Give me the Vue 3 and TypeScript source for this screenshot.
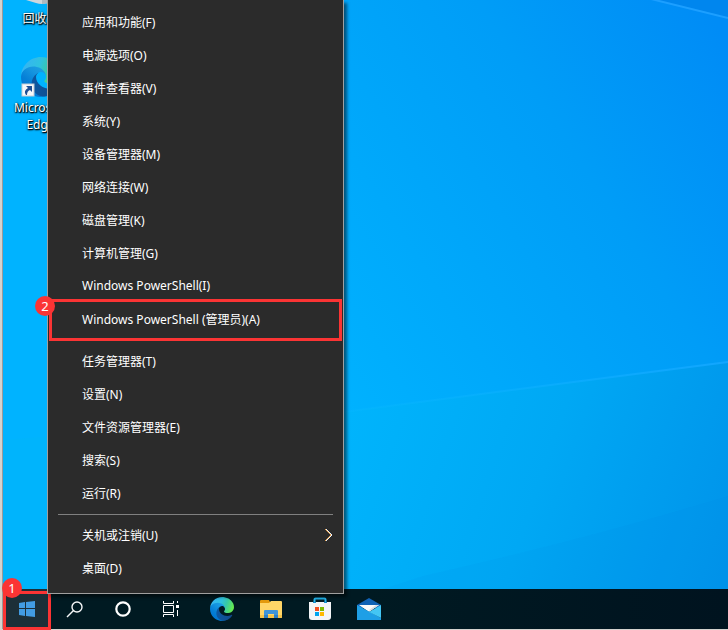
<script setup lang="ts">
interface MenuEntry {
  label: string
  submenu?: boolean
  step?: number
}

const groups: MenuEntry[][] = [
  [
    { label: '应用和功能(F)' },
    { label: '电源选项(O)' },
    { label: '事件查看器(V)' },
    { label: '系统(Y)' },
    { label: '设备管理器(M)' },
    { label: '网络连接(W)' },
    { label: '磁盘管理(K)' },
    { label: '计算机管理(G)' },
    { label: 'Windows PowerShell(I)' },
    { label: 'Windows PowerShell (管理员)(A)', step: 2 },
  ],
  [
    { label: '任务管理器(T)' },
    { label: '设置(N)' },
    { label: '文件资源管理器(E)' },
    { label: '搜索(S)' },
    { label: '运行(R)' },
  ],
  [{ label: '关机或注销(U)', submenu: true }, { label: '桌面(D)' }],
]
</script>

<template>
  <div class="screen">
    <svg width="0" height="0" class="defs" aria-hidden="true">
      <defs>
        <linearGradient id="edge-a" gradientUnits="userSpaceOnUse" x1="58" y1="177" x2="236" y2="177">
          <stop offset="0" stop-color="#0c59a4" />
          <stop offset="1" stop-color="#114a8b" />
        </linearGradient>
        <linearGradient id="edge-b" gradientUnits="userSpaceOnUse" x1="150" y1="90" x2="50" y2="215">
          <stop offset="0" stop-color="#1b9de2" />
          <stop offset="0.3" stop-color="#1595df" />
          <stop offset="0.7" stop-color="#0680d7" />
          <stop offset="1" stop-color="#0078d4" />
        </linearGradient>
        <linearGradient id="edge-c" gradientUnits="userSpaceOnUse" x1="20" y1="50" x2="240" y2="130">
          <stop offset="0" stop-color="#35b5f1" />
          <stop offset="0.4" stop-color="#2fc2df" />
          <stop offset="0.65" stop-color="#36c8a8" />
          <stop offset="1" stop-color="#66eb4e" />
        </linearGradient>
        <symbol id="edge" viewBox="0 0 256 256">
          <path fill="url(#edge-a)" d="M231 190.500c-3.400 1.800-6.900 3.400-10.500 4.700-11.500 4.300-23.600 6.500-35.900 6.500-47.300 0-88.500-32.500-88.500-74.300.1-11.400 6.400-21.900 16.400-27.300-42.800 1.800-53.800 46.400-53.800 72.500 0 73.900 68.100 81.400 82.800 81.400 7.900 0 19.800-2.300 27-4.600l1.300-.4c27.600-9.500 51-28.100 66.600-52.800 1.200-1.900.6-4.300-1.200-5.500-1.300-.8-2.900-.9-4.200-.2z" />
          <path fill="url(#edge-b)" d="M105.700 241.400c-8.900-5.500-16.600-12.800-22.700-21.300-26.300-36-18.400-86.500 17.600-112.800 3.800-2.700 7.700-5.200 11.900-7.200 3.100-1.500 8.400-4.100 15.500-4 10.100.1 19.600 4.900 25.700 13 4 5.400 6.300 11.900 6.400 18.700 0-.2 24.500-79.600-80-79.600-43.900 0-80 41.700-80 78.200-.2 19.300 4 38.500 12.100 56 27.600 58.800 94.800 87.600 156.400 67.100-21.100 6.600-44.100 3.700-62.900-8.100z" />
          <path fill="url(#edge-c)" d="M152.300 148.900c-.9 1-3.400 2.500-3.400 5.600 0 2.600 1.700 5.200 4.800 7.300 14.300 10 41.400 8.600 41.500 8.600 10.700 0 21.100-2.900 30.300-8.300 18.800-11 30.400-31.100 30.400-52.900.3-22.400-8-37.300-11.300-43.900C223.500 23.900 177.700 0 128 0 58 0 1 56.200 0 126.200c.5-36.500 36.800-66 80-66 3.500 0 23.500.3 42 10.100 16.300 8.600 24.900 18.900 30.800 29.200 6.200 10.700 7.300 24.100 7.300 29.500s-2.700 13.300-7.800 19.900z" />
        </symbol>
      </defs>
    </svg>

    <main class="desktop">
      <svg class="wallpaper" viewBox="0 0 725 589" preserveAspectRatio="none" aria-hidden="true">
        <defs>
          <linearGradient id="sky" gradientUnits="userSpaceOnUse" x1="300" y1="380" x2="755" y2="90">
            <stop offset="0" stop-color="#00b3ff" />
            <stop offset="0.3" stop-color="#00a9fb" />
            <stop offset="0.65" stop-color="#009df7" />
            <stop offset="1" stop-color="#008cf6" />
          </linearGradient>
          <linearGradient id="ground" gradientUnits="userSpaceOnUse" x1="340" y1="430" x2="725" y2="560">
            <stop offset="0" stop-color="#00b4fc" />
            <stop offset="0.5" stop-color="#00a8f4" />
            <stop offset="1" stop-color="#0094ea" />
          </linearGradient>
          <linearGradient id="beam" gradientUnits="userSpaceOnUse" x1="340" y1="0" x2="725" y2="0">
            <stop offset="0" stop-color="#08b8ff" stop-opacity="0.3" />
            <stop offset="1" stop-color="#12a6ff" />
          </linearGradient>
        </defs>
        <rect width="725" height="589" fill="url(#sky)" />
        <path d="M652 0L725 18V0z" fill="#0086ee" />
        <path d="M644-2L725 18" stroke="#1c9fff" stroke-width="2" fill="none" />
        <path d="M0 440L340 412L725 362V589H0z" fill="url(#ground)" />
        <path d="M340 412L725 362" stroke="url(#beam)" stroke-width="2" fill="none" />
        <path d="M420 576Q580 540 725 496V589H380z" fill="#007fd8" fill-opacity="0.06" />
      </svg>

      <a class="shortcut" href="#recycle">
        <svg class="bin" viewBox="0 0 40 8" aria-hidden="true">
          <path d="M5 0H35V2L21 4Q18 4 15 3L5 0z" fill="#cfd6dc" />
          <path d="M21 0H35V2L21 4z" fill="#aeb8c0" />
        </svg>
        <span>回收站</span>
      </a>
      <a class="shortcut second" href="#edge-browser">
        <svg class="edge-large" viewBox="0 0 40 40" aria-hidden="true">
          <use href="#edge" width="40" height="40" />
          <rect x="1" y="27" width="12" height="12" fill="#f6f8fa" stroke="#c4ccd4" stroke-width="1" />
          <path d="M5 29h6v6l-2-2q-3 1-3 5H5q-3-4 2-7z" fill="#1f4f94" />
        </svg>
        <span>Microsoft Edge</span>
      </a>
    </main>

    <nav class="menu" aria-label="Windows">
      <ul v-for="(group, g) in groups" :key="g" class="group">
        <li v-for="entry in group" :key="entry.label" class="row">
          <button type="button" class="entry">
            <span>{{ entry.label }}</span>
            <svg v-if="entry.submenu" class="chevron" viewBox="0 0 9 14" aria-hidden="true">
              <path d="M1 1L7 7L1 13" fill="none" stroke="#e5a04a" stroke-width="1" />
              <path d="M2 1L8 7L2 13" fill="none" stroke="#e8f0ff" stroke-width="1" />
            </svg>
          </button>
          <div v-if="entry.step" class="mark mark-row">
            <span class="badge">{{ entry.step }}</span>
          </div>
        </li>
      </ul>
    </nav>

    <footer class="taskbar">
      <div class="start-slot">
        <button type="button" class="task start" aria-label="开始">
          <svg width="16" height="16" viewBox="0 0 16 16">
            <path d="M0 2L6 1V7H0zM7 1L16 0V7H7zM0 8H6V15L0 14zM7 8H16V16L7 15z" fill="#429ce3" />
          </svg>
        </button>
        <div class="mark mark-start"><span class="badge">1</span></div>
      </div>
      <button type="button" class="task" aria-label="搜索">
        <svg width="18" height="18" viewBox="0 0 18 18" fill="none" stroke="#f5f7f8">
          <circle cx="11" cy="7" r="5" stroke-width="1.400" />
          <path d="M7.500 10.500L1 17" stroke-width="1.500" />
        </svg>
      </button>
      <button type="button" class="task" aria-label="Cortana">
        <svg width="16" height="16" viewBox="0 0 16 16" fill="none">
          <circle cx="8" cy="8" r="6.700" stroke="#fff" stroke-width="2.200" />
        </svg>
      </button>
      <button type="button" class="task" aria-label="任务视图">
        <svg width="18" height="16" viewBox="0 0 18 16" fill="none" stroke="#fff">
          <path d="M1.500 0V2.500H11.500V0M1.500 16V13.500H11.500V16M1.500 4.500H11.500V11.500H1.500zM15.500 0V2M15.500 9V15" />
          <path d="M14 4H17V7H14z" fill="#fff" stroke="none" />
        </svg>
      </button>
      <div class="pinned">
        <button type="button" class="task" aria-label="Microsoft Edge">
          <svg width="24" height="24"><use href="#edge" width="24" height="24" /></svg>
        </button>
        <button type="button" class="task" aria-label="文件资源管理器">
          <svg width="22" height="18" viewBox="0 0 22 18">
            <path d="M0 1Q0 0 1 0H9L10 2V5H0z" fill="#e39a0c" />
            <path d="M0 3H9L11 1H21Q22 1 22 2V17Q22 18 21 18H1Q0 18 0 17z" fill="#ffd667" />
            <path d="M0 15H22V17Q22 18 21 18H1Q0 18 0 17z" fill="#f5c34a" />
            <path d="M4 18V11Q4 10 5 10H17Q18 10 18 11V18H14V14H8V18z" fill="#3f94d8" />
            <path d="M4 18V15H8V18zM14 18V15H18V18z" fill="#2d7fc4" />
          </svg>
        </button>
        <button type="button" class="task" aria-label="Microsoft Store">
          <svg width="24" height="24" viewBox="0 0 24 24">
            <path d="M6.500 6V2.500Q6.500 1.500 7.500 1.500H16.500Q17.500 1.500 17.500 2.500V6" fill="none" stroke="#22b5ee" stroke-width="2" />
            <path d="M1 5H23V20Q23 23 20 23H4Q1 23 1 20z" fill="#f3f5f7" />
            <path d="M5 5H8V6H5zM16 5H19V6H16z" fill="#158fd0" />
            <path d="M7 10H11V14H7z" fill="#f25022" />
            <path d="M12 10H16V14H12z" fill="#7fba00" />
            <path d="M7 15H11V19H7z" fill="#00a4ef" />
            <path d="M12 15H16V19H12z" fill="#ffb900" />
          </svg>
        </button>
        <button type="button" class="task" aria-label="邮件">
          <svg width="24" height="23" viewBox="0 0 24 23">
            <path d="M0 7L12 0L24 7V10H0z" fill="#1062b5" />
            <path d="M2 7H22L12 14z" fill="#fafafa" />
            <path d="M13 13L22 7L19 7L12 12z" fill="#d8dde2" />
            <path d="M0 7L24 20V22H0z" fill="#1e9fe6" />
            <path d="M24 7V20L12 14z" fill="#43c6f4" />
          </svg>
        </button>
      </div>
    </footer>
  </div>
</template>

<style>
body {
  margin: 0;
  background: #d4d2ce;
}
</style>

<style scoped>
.screen {
  position: relative;
  display: flex;
  flex-direction: column;
  box-sizing: border-box;
  min-height: 100vh;
  padding: 0 0 1px 2px;
  overflow: hidden;
  font-family: "Noto Sans", "Noto Sans CJK SC", sans-serif;
  font-size: 12px;
}
.defs {
  position: absolute;
}
.desktop {
  position: relative;
  flex: 1;
  display: flex;
  flex-direction: column;
  align-items: flex-start;
  border-left: 1px solid #9a9a9a;
  background: #00b0ff;
}
.wallpaper {
  position: absolute;
  inset: 0;
  width: 100%;
  height: 100%;
}
.shortcut {
  position: relative;
  display: flex;
  flex-direction: column;
  align-items: center;
  width: 75px;
  color: #fff;
  line-height: 17px;
  text-align: center;
  text-decoration: none;
  text-shadow: 1px 1px 1px #000, 0 1px 2px #000, 1px 0 2px rgba(0, 0, 0, 0.6);
}
.bin {
  width: 40px;
  height: 8px;
  margin-bottom: 2px;
}
.second {
  margin-top: 30px;
}
.edge-large {
  width: 40px;
  height: 40px;
  margin-bottom: 2px;
}
.menu {
  position: absolute;
  z-index: 2;
  top: 0;
  left: 47px;
  box-sizing: border-box;
  width: 297px;
  padding: 6px 0 8px;
  border: 1px solid #a0a0a0;
  border-top: 0;
  background: #2b2b2b;
  box-shadow: 3px 3px 3px rgba(0, 0, 0, 0.5);
}
.group {
  margin: 0;
  padding: 0;
  list-style: none;
}
.group + .group::before {
  content: "";
  display: block;
  height: 1px;
  margin: 4px 10px;
  background: #808080;
}
.row {
  position: relative;
}
.entry {
  display: flex;
  align-items: center;
  justify-content: space-between;
  width: 100%;
  height: 33px;
  padding: 0 10px 2px 34px;
  border: 0;
  background: none;
  color: #fff;
  font: inherit;
  text-align: left;
}
.chevron {
  width: 9px;
  height: 14px;
}
.mark {
  position: absolute;
  box-sizing: border-box;
  border: 3px solid #fb3434;
  pointer-events: none;
}
.mark-row {
  inset: -4px 1px -5px;
}
.mark-start {
  inset: 2px 0 -1px;
}
.badge {
  position: absolute;
  top: -6px;
  left: -17px;
  width: 20px;
  height: 20px;
  border-radius: 50%;
  background: #fb3434;
  color: #fff;
  font-size: 13px;
  line-height: 20px;
  text-align: center;
}
.mark-start .badge {
  top: -16px;
  left: -4px;
}
.taskbar {
  position: relative;
  z-index: 1;
  display: flex;
  height: 40px;
  border-left: 1px solid #9a9a9a;
  background: linear-gradient(90deg, #001a22 50%, #00131f);
}
.start-slot {
  position: relative;
  z-index: 3;
}
.task {
  display: flex;
  align-items: center;
  justify-content: center;
  width: 48px;
  height: 40px;
  padding: 0;
  border: 0;
  background: none;
}
.start {
  background: #1c2f38;
}
.pinned {
  display: flex;
  gap: 1px;
  margin-left: 3px;
}
</style>
